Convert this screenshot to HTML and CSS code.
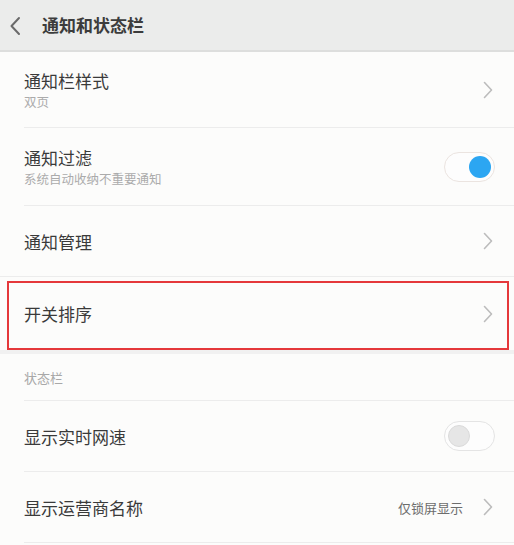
FILE: index.html
```html
<!DOCTYPE html>
<html lang="zh-CN">
<head>
<meta charset="utf-8">
<title>通知和状态栏</title>
<link rel="stylesheet" href="styles.css">
</head>
<body>
<div class="page">
  <header class="topbar">
    <svg class="back" width="12" height="20" viewBox="0 0 12 20"><path d="M10 2 L2.5 10 L10 18" fill="none" stroke="#6a6a6a" stroke-width="2" stroke-linecap="round" stroke-linejoin="round"/></svg>
    <h1 class="title">通知和状态栏</h1>
  </header>

  <div class="row r1">
    <div class="text">
      <div class="label">通知栏样式</div>
      <div class="sub">双页</div>
    </div>
    <svg class="chev" width="10" height="18" viewBox="0 0 10 18"><path d="M1.5 1.5 L8.5 9 L1.5 16.5" fill="none" stroke="#bcbcbc" stroke-width="1.6" stroke-linecap="round" stroke-linejoin="round"/></svg>
  </div>

  <div class="row r2">
    <div class="text">
      <div class="label">通知过滤</div>
      <div class="sub">系统自动收纳不重要通知</div>
    </div>
    <div class="toggle on"><span class="knob"></span></div>
  </div>

  <div class="row r3 full">
    <div class="text"><div class="label">通知管理</div></div>
    <svg class="chev" width="10" height="18" viewBox="0 0 10 18"><path d="M1.5 1.5 L8.5 9 L1.5 16.5" fill="none" stroke="#bcbcbc" stroke-width="1.6" stroke-linecap="round" stroke-linejoin="round"/></svg>
  </div>

  <div class="row r4 nodiv">
    <div class="text"><div class="label">开关排序</div></div>
    <svg class="chev" width="10" height="18" viewBox="0 0 10 18"><path d="M1.5 1.5 L8.5 9 L1.5 16.5" fill="none" stroke="#bcbcbc" stroke-width="1.6" stroke-linecap="round" stroke-linejoin="round"/></svg>
    <div class="highlight"></div>
  </div>

  <div class="band"></div>

  <div class="section">状态栏</div>

  <div class="row r5">
    <div class="text"><div class="label">显示实时网速</div></div>
    <div class="toggle off"><span class="knob"></span></div>
  </div>

  <div class="row r6">
    <div class="text"><div class="label">显示运营商名称</div></div>
    <span class="value">仅锁屏显示</span>
    <svg class="chev" width="10" height="18" viewBox="0 0 10 18"><path d="M1.5 1.5 L8.5 9 L1.5 16.5" fill="none" stroke="#bcbcbc" stroke-width="1.6" stroke-linecap="round" stroke-linejoin="round"/></svg>
  </div>
</div>
</body>
</html>
```

FILE: styles.css
```css
html, body {
  margin: 0;
  padding: 0;
  background: #fcfcfb;
}
body {
  font-family: "Noto Sans CJK SC", "Noto Sans", sans-serif;
  color: #3a3a3a;
  width: 514px;
  height: 545px;
  overflow: hidden;
}
.page {
  display: flex;
  flex-direction: column;
}
.topbar {
  height: 50px;
  background: #ebeceb;
  border-bottom: 2px solid #dddedd;
  display: flex;
  align-items: center;
  padding-left: 9px;
  box-sizing: content-box;
}
.back {
  display: block;
  margin-top: 1px;
}
.title {
  margin: 0 0 0 21px;
  font-size: 17px;
  font-weight: 700;
  color: #3c3c3c;
  line-height: 24px;
}
.row {
  position: relative;
  display: flex;
  align-items: center;
  margin-left: 24px;
  padding-right: 21px;
  border-bottom: 1px solid #ececec;
  box-sizing: border-box;
}
.row.full {
  margin-left: 0;
  padding-left: 24px;
}
.row.nodiv {
  border-bottom: none;
}
.r1 { height: 76px; }
.r2 { height: 78px; }
.r3 { height: 71px; }
.r4 { height: 73px; }
.r5 { height: 71px; }
.r6 { height: 71px; }
.text {
  flex: 1;
  display: flex;
  flex-direction: column;
}
.label {
  font-size: 17px;
  line-height: 25px;
  color: #3a3a3a;
}
.sub {
  font-size: 12.5px;
  line-height: 18px;
  color: #ababab;
}
.chev {
  display: block;
  flex: none;
}
.value {
  font-size: 13px;
  color: #6d6d6d;
  margin-right: 20px;
}
.band {
  height: 4px;
  background: #f1f1f1;
}
.section {
  height: 46px;
  margin-left: 24px;
  display: flex;
  align-items: center;
  font-size: 13px;
  color: #a8a8a8;
  border-bottom: 1px solid #ececec;
}
.toggle {
  position: relative;
  width: 51px;
  height: 30px;
  border-radius: 15px;
  box-sizing: border-box;
  flex: none;
  margin-right: -2px;
  background: #fdfdfd;
}
.toggle.on {
  border: 1px solid #ebe4e0;
}
.toggle.off {
  border: 1px solid #e4e4e4;
}
.knob {
  position: absolute;
  top: 3px;
  width: 22px;
  height: 22px;
  border-radius: 50%;
}
.toggle.on .knob {
  right: 3px;
  background: #2ca6f2;
}
.toggle.off .knob {
  left: 3px;
  background: #e6e6e6;
  border: 1px solid #dadada;
  box-sizing: border-box;
}
.highlight {
  position: absolute;
  left: -17px;
  right: 5px;
  top: 4px;
  bottom: 0;
  border: 2px solid #e5383b;
  pointer-events: none;
}
```
